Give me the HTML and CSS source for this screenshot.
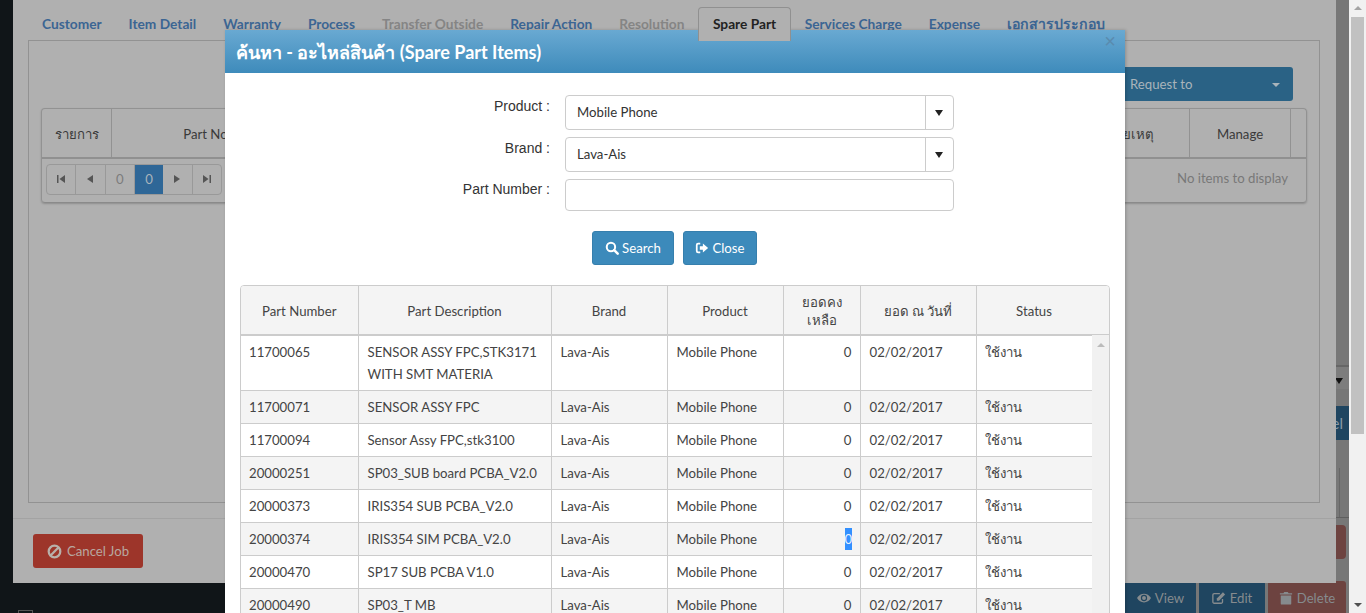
FILE: index.html
```html
<!DOCTYPE html>
<html lang="en">
<head>
    <meta charset="UTF-8">
    <title>Spare Part Items</title>
    <link rel="stylesheet" href="styles.css">
</head>
<body>
    <!-- window behind the job window -->
    <div class="back-window">
        <div class="back-select"><span class="caret-dark"></span></div>
        <div class="back-btn-row"><span class="back-blue">Cancel</span></div>
        <div class="back-cells"><span></span></div>
        <div class="back-red-row"><span class="back-red"></span></div>
        <div class="back-actions">
            <span class="act act-blue act-view">
                <svg class="ico" viewBox="0 0 16 16"><path d="M0 8c2-3.400 4.800-5 8-5s6 1.600 8 5c-2 3.400-4.800 5-8 5s-6-1.600-8-5z" fill="currentColor"/><circle cx="8" cy="8" r="3.600" fill="#1f4560"/><circle cx="8" cy="8" r="2.200" fill="currentColor"/></svg>View
            </span>
            <span class="act act-blue act-edit">
                <svg class="ico" viewBox="0 0 16 16"><path d="M12 9v3.500a1.500 1.500 0 0 1-1.500 1.500h-8A1.500 1.500 0 0 1 1 12.500v-8A1.500 1.500 0 0 1 2.500 3H9" fill="none" stroke="currentColor" stroke-width="1.500"/><path d="M5.500 8.500 12.500 1.500l2.500 2.500-7 7H5.500z" fill="currentColor"/></svg>Edit
            </span>
            <span class="act act-red">
                <svg class="ico" viewBox="0 0 16 16"><path d="M2 5h12v9.500a1 1 0 0 1-1 1H3a1 1 0 0 1-1-1zM1 2.500h4l1-1.500h4l1 1.500h4V4H1z" fill="currentColor"/></svg>Delete
            </span>
        </div>
    </div>

    <!-- job window -->
    <div class="job-window">
        <ul class="tabs">
            <li class="tab">Customer</li>
            <li class="tab">Item Detail</li>
            <li class="tab">Warranty</li>
            <li class="tab">Process</li>
            <li class="tab tab-off">Transfer Outside</li>
            <li class="tab">Repair Action</li>
            <li class="tab tab-off">Resolution</li>
            <li class="tab tab-on">Spare Part</li>
            <li class="tab">Services Charge</li>
            <li class="tab">Expense</li>
            <li class="tab tab-th">เอกสารประกอบ</li>
        </ul>
        <div class="tab-box">
            <div class="request-row">
                <div class="request-btn">Request to <span class="caret-light"></span></div>
            </div>
            <div class="back-grid">
                <div class="back-head">
                    <div class="bh bh-item">รายการ</div>
                    <div class="bh bh-part">Part No.</div>
                    <div class="bh bh-note">หมายเหตุ</div>
                    <div class="bh bh-manage">Manage</div>
                    <div class="bh-end"></div>
                </div>
                <div class="back-pager">
                    <div class="pager">
                        <span class="pg"><svg class="pg-ico" viewBox="0 0 10 10"><path d="M1 1h1.500v8H1zM9 1v8L3.500 5z"/></svg></span>
                        <span class="pg"><svg class="pg-ico" viewBox="0 0 10 10"><path d="M8 1v8L2 5z"/></svg></span>
                        <span class="pg pg-num">0</span>
                        <span class="pg pg-cur">0</span>
                        <span class="pg"><svg class="pg-ico" viewBox="0 0 10 10"><path d="M2 1v8l6-4z"/></svg></span>
                        <span class="pg"><svg class="pg-ico" viewBox="0 0 10 10"><path d="M7.500 1H9v8H7.500zM1 1v8l5.500-4z"/></svg></span>
                    </div>
                    <span class="no-items">No items to display</span>
                </div>
            </div>
        </div>
        <div class="job-foot">
            <span class="cancel-btn">
                <svg class="ico ico-ban" viewBox="0 0 16 16"><circle cx="8" cy="8" r="6.200" fill="none" stroke="currentColor" stroke-width="2.400"/><path d="M3.800 12.200 12.200 3.800" stroke="currentColor" stroke-width="2.400"/></svg>Cancel Job
            </span>
        </div>
    </div>

    <div class="under-check"></div>

    <!-- search dialog -->
    <div class="dialog">
        <div class="dialog-head">
            <span class="dialog-title">ค้นหา - อะไหล่สินค้า (Spare Part Items)</span>
            <span class="dialog-x">×</span>
        </div>
        <div class="dialog-body">
            <div class="form-row">
                <label class="form-label">Product :</label>
                <div class="combo"><span class="combo-val">Mobile Phone</span><span class="combo-arrow"><span class="caret-dark"></span></span></div>
            </div>
            <div class="form-row">
                <label class="form-label">Brand :</label>
                <div class="combo"><span class="combo-val">Lava-Ais</span><span class="combo-arrow"><span class="caret-dark"></span></span></div>
            </div>
            <div class="form-row form-row-last">
                <label class="form-label">Part Number :</label>
                <input class="text-input" type="text">
            </div>
            <div class="btn-row">
                <span class="btn btn-search">
                    <svg class="ico" viewBox="0 0 16 16"><circle cx="6.800" cy="6.800" r="4.800" fill="none" stroke="currentColor" stroke-width="2.300"/><path d="M10.500 10.500 14.500 14.500" stroke="currentColor" stroke-width="2.800" stroke-linecap="round"/></svg>Search
                </span>
                <span class="btn btn-close">
                    <svg class="ico" viewBox="0 0 16 16"><path d="M6 3H3.500A1.500 1.500 0 0 0 2 4.500v7A1.500 1.500 0 0 0 3.500 13H6" fill="none" stroke="currentColor" stroke-width="2"/><path d="M5.500 6H9V2.800L15 8l-6 5.200V10H5.500z" fill="currentColor"/></svg>Close
                </span>
            </div>

            <div class="grid">
                <div class="grid-main">
                    <table class="parts">
                        <thead>
                            <tr>
                                <th class="c-no">Part Number</th>
                                <th class="c-desc">Part Description</th>
                                <th class="c-brand">Brand</th>
                                <th class="c-prod">Product</th>
                                <th class="c-qty">ยอดคง<br>เหลือ</th>
                                <th class="c-date">ยอด ณ วันที่</th>
                                <th class="c-status">Status</th>
                            </tr>
                        </thead>
                        <tbody>
                            <tr class="row-tall">
                                <td>11700065</td><td>SENSOR ASSY FPC,STK3171 WITH SMT MATERIA</td><td>Lava-Ais</td><td>Mobile Phone</td><td class="num">0</td><td>02/02/2017</td><td>ใช้งาน</td>
                            </tr>
                            <tr class="alt">
                                <td>11700071</td><td>SENSOR ASSY FPC</td><td>Lava-Ais</td><td>Mobile Phone</td><td class="num">0</td><td>02/02/2017</td><td>ใช้งาน</td>
                            </tr>
                            <tr>
                                <td>11700094</td><td>Sensor Assy FPC,stk3100</td><td>Lava-Ais</td><td>Mobile Phone</td><td class="num">0</td><td>02/02/2017</td><td>ใช้งาน</td>
                            </tr>
                            <tr class="alt">
                                <td>20000251</td><td>SP03_SUB board PCBA_V2.0</td><td>Lava-Ais</td><td>Mobile Phone</td><td class="num">0</td><td>02/02/2017</td><td>ใช้งาน</td>
                            </tr>
                            <tr>
                                <td>20000373</td><td>IRIS354 SUB PCBA_V2.0</td><td>Lava-Ais</td><td>Mobile Phone</td><td class="num">0</td><td>02/02/2017</td><td>ใช้งาน</td>
                            </tr>
                            <tr class="alt">
                                <td>20000374</td><td>IRIS354 SIM PCBA_V2.0</td><td>Lava-Ais</td><td>Mobile Phone</td><td class="num"><span class="picked">0</span></td><td>02/02/2017</td><td>ใช้งาน</td>
                            </tr>
                            <tr>
                                <td>20000470</td><td>SP17 SUB PCBA V1.0</td><td>Lava-Ais</td><td>Mobile Phone</td><td class="num">0</td><td>02/02/2017</td><td>ใช้งาน</td>
                            </tr>
                            <tr class="alt">
                                <td>20000490</td><td>SP03_T MB</td><td>Lava-Ais</td><td>Mobile Phone</td><td class="num">0</td><td>02/02/2017</td><td>ใช้งาน</td>
                            </tr>
                        </tbody>
                    </table>
                </div>
                <div class="grid-side">
                    <div class="side-head"></div>
                    <div class="side-track"><span class="arrow-up"></span></div>
                </div>
            </div>
        </div>
    </div>

    <!-- page scrollbar -->
    <div class="page-scroll">
        <span class="ps-up"></span>
        <div class="ps-thumb"></div>
        <span class="ps-down"></span>
    </div>
</body>
</html>
```

FILE: styles.css
```css
* {
    margin: 0;
    padding: 0;
    box-sizing: border-box;
}

html, body {
    height: 100%;
    overflow: hidden;
}

body {
    position: relative;
    background: #101518;
    font-family: Lato, "Noto Sans", sans-serif;
    font-size: 13.2px;
    color: #333;
}

.ico {
    width: 14px;
    height: 14px;
    margin-right: 4px;
    vertical-align: -2px;
}

/* window behind */
.back-window {
    position: absolute;
    left: 620px;
    top: 0;
    width: 729px;
    height: 613px;
    background: #777;
    padding-top: 365px;
    display: flex;
    flex-direction: column;
    align-items: flex-end;
}

.back-select {
    width: 100%;
    height: 24px;
    border-top: 2px solid #666;
    background: #7d7d7d;
    text-align: right;
    padding: 11px 6px 0 0;
    line-height: 0;
}

.back-select .caret-dark {
    border-top-color: #111;
}

.back-btn-row {
    width: 100%;
    height: 34px;
    margin-top: 17px;
    text-align: right;
}

.back-blue {
    display: inline-block;
    height: 34px;
    line-height: 34px;
    padding: 0 6px 0 20px;
    background: #1f4560;
    color: #8a9aa6;
    font-size: 15px;
}

.back-cells {
    width: 100%;
    height: 50px;
    margin-top: 28px;
    border-bottom: 1px solid #5f5f5f;
    display: flex;
    justify-content: flex-end;
}

.back-cells span {
    width: 1px;
    height: 100%;
    background: #666;
    margin-right: 9px;
}

.back-red-row {
    width: 100%;
    height: 34px;
    margin-top: 7px;
    padding-right: 3px;
    text-align: right;
}

.back-red {
    display: inline-block;
    width: 60px;
    height: 34px;
    background: #6d4340;
    border-radius: 4px;
}

.back-actions {
    display: flex;
    gap: 3px;
    margin-top: 22px;
    padding-right: 3px;
}

.act {
    height: 32px;
    line-height: 34px;
    text-align: center;
    color: #868b8e;
    border-radius: 3px 3px 0 0;
}

.act-blue {
    background: #1f4560;
}

.act-view {
    width: 71px;
}

.act-edit {
    width: 66px;
}

.act-red {
    width: 78px;
    background: #6d4340;
}

/* job window */
.job-window {
    position: absolute;
    left: 13px;
    top: 0;
    width: 1323px;
    height: 583px;
    background: #b0b0b0;
    display: flex;
    flex-direction: column;
}

.tabs {
    list-style: none;
    display: flex;
    height: 41px;
    padding: 7px 0 0 15.500px;
    margin-bottom: -1px;
    font-size: 13.720px;
}

.tab {
    height: 34px;
    padding: 6px 12.500px 0;
    line-height: 20px;
    border: 1px solid transparent;
    border-bottom: 0;
    font-weight: 700;
    color: #3b6593;
    white-space: nowrap;
}

.tab-th {
    font-size: 14.100px;
}

.tab-off {
    color: #858585;
}

.tab-on {
    padding: 6px 14px 0;
    color: #222;
    border-color: #909090;
    border-radius: 4px 4px 0 0;
    background: #b0b0b0;
    position: relative;
    z-index: 1;
}

.tab-box {
    margin: 0 16px 0 15px;
    height: 463px;
    border: 1px solid #929292;
    padding: 26px 12px 0;
}

.request-row {
    display: flex;
    justify-content: flex-end;
    padding-right: 14px;
}

.request-btn {
    width: 260px;
    height: 34px;
    line-height: 34px;
    padding-left: 97px;
    border-radius: 3px;
    background: #2a6285;
    color: #a9b4bb;
    position: relative;
}

.caret-light {
    position: absolute;
    right: 13px;
    top: 16px;
    border: 4px solid transparent;
    border-top-color: #a9b4bb;
}

.back-grid {
    margin-top: 7px;
    height: 95px;
    border: 1px solid #929292;
    border-bottom-color: #8a8a8a;
    border-radius: 4px;
    box-shadow: 0 1px 2px rgba(0, 0, 0, 0.2);
}

.back-head {
    display: flex;
    height: 50px;
    border-bottom: 2px solid #909090;
}

.bh {
    line-height: 50px;
    text-align: center;
    border-right: 1px solid #929292;
    color: #3a3a3a;
}

.bh-item {
    width: 70px;
}

.bh-part {
    width: 191px;
}

.bh-note {
    width: 887px;
    padding-left: 759px;
}

.bh-manage {
    width: 101px;
}

.bh-end {
    flex: 1;
}

.back-pager {
    display: flex;
    align-items: center;
    justify-content: space-between;
    padding: 5px 18px 0 4px;
}

.pager {
    display: flex;
    border: 1px solid #999;
    border-radius: 4px;
    height: 31px;
    width: 176px;
    overflow: hidden;
}

.pg {
    flex: 1;
    line-height: 29px;
    text-align: center;
    border-right: 1px solid #999;
    color: #444;
}

.pg:last-child {
    border-right: 0;
}

.pg-num {
    color: #7c7c7c;
}

.pg-cur {
    background: #2f6797;
    color: #a9b4bb;
    border-right: 0;
}

.pg-ico {
    width: 10px;
    height: 10px;
    fill: #555;
}

.no-items {
    color: #787878;
    margin-top: -3px;
}

.job-foot {
    margin-top: 15px;
    border-top: 1px solid #a3a3a3;
    padding: 15px 20px 0;
}

.cancel-btn {
    display: inline-block;
    width: 110px;
    height: 34px;
    line-height: 34px;
    text-align: center;
    border-radius: 3px;
    background: #9d352a;
    color: #b8a8a0;
}

.ico-ban {
    width: 15px;
    height: 15px;
    margin-right: 5px;
    vertical-align: -3px;
    color: #b8b0aa;
}

.under-check {
    position: absolute;
    left: 18px;
    top: 610px;
    width: 15px;
    height: 3px;
    border: 1px solid #555;
    border-bottom: 0;
}

/* dialog */
.dialog {
    position: absolute;
    left: 225px;
    top: 30px;
    width: 900px;
    height: 583px;
    background: #fff;
    box-shadow: 1px 0 3px rgba(0, 0, 0, 0.2);
    overflow: hidden;
}

.dialog-head {
    height: 43px;
    padding: 0 11px;
    background: linear-gradient(#69a9d2, #3e8bbb);
    display: flex;
    justify-content: space-between;
    color: #fff;
}

.dialog-title {
    font-size: 18px;
    font-weight: 700;
    line-height: 44px;
}

.dialog-x {
    font-size: 20px;
    line-height: 22px;
    color: #5a8bae;
    margin-right: -2px;
    font-family: "Liberation Sans", sans-serif;
}

.dialog-body {
    padding: 22px 15px 0;
}

.form-row {
    display: flex;
    height: 35px;
    margin-bottom: 7px;
}

.form-row-last {
    height: 32px;
    margin-bottom: 20px;
}

.form-row-last .form-label {
    line-height: 21px;
}

.form-label {
    width: 310px;
    text-align: right;
    font-family: "Liberation Sans", Arial, sans-serif;
    font-size: 14px;
    line-height: 23px;
    color: #333;
}

.combo,
.text-input {
    width: 389px;
    margin-left: 15px;
    border: 1px solid #ccc;
    border-radius: 4px;
}

.combo {
    display: flex;
    height: 35px;
    line-height: 33px;
}

.combo-val {
    flex: 1;
    padding-left: 11px;
}

.combo-arrow {
    width: 28px;
    border-left: 1px solid #ccc;
    text-align: center;
    line-height: 0;
    padding: 14px 2px 0 0;
}

.caret-dark {
    display: inline-block;
    border: 4px solid transparent;
    border-top: 6px solid #222;
    border-bottom: 0;
}

.text-input {
    height: 32px;
    outline: none;
}

.btn-row {
    display: flex;
    gap: 9px;
    padding-left: 352px;
}

.btn {
    height: 34px;
    text-align: center;
    border-radius: 3px;
    background: #3c8abb;
    border: 1px solid #367fad;
    line-height: 32px;
    color: #fff;
}

.btn-search {
    width: 82px;
}

.btn-close {
    width: 74px;
}

.btn .ico {
    margin-right: 3px;
}

.grid {
    display: flex;
    width: 870px;
    margin-top: 20px;
    border: 1px solid #ccc;
    border-radius: 4px;
    overflow: hidden;
}

.grid-main {
    width: 851px;
}

.parts {
    border-collapse: collapse;
    table-layout: fixed;
    width: 851px;
}

.parts th {
    height: 49px;
    padding-top: 2px;
    font-weight: 400;
    line-height: 18px;
    background: #f4f4f4;
    border-right: 1px solid #ccc;
    border-bottom: 2px solid #ccc;
    color: #444;
}

.parts td {
    height: 33px;
    padding: 5px 8px 3px;
    line-height: 22px;
    vertical-align: top;
    border-right: 1px solid #ccc;
    border-bottom: 1px solid #ccc;
    color: #444;
}

.parts td + td {
    padding-left: 9px;
}

.parts td:last-child {
    padding-left: 8px;
}

.parts .row-tall td {
    height: 55px;
}

.parts .alt td {
    background: #f4f4f4;
}

.parts .num {
    text-align: right;
}

.picked {
    display: inline-block;
    background: #3390ff;
    color: #e8f0ff;
    width: 7px;
}

.c-no { width: 117px; }
.c-desc { width: 193px; }
.c-brand { width: 116px; }
.c-prod { width: 116px; }
.c-qty { width: 77px; }
.c-date { width: 116px; }
.c-status { width: 116px; }

.grid-side {
    width: 17px;
    display: flex;
    flex-direction: column;
}

.side-head {
    height: 49px;
    background: #f4f4f4;
    border-bottom: 1px solid #ccc;
}

.side-track {
    flex: 1;
    background: #f1f1f1;
    text-align: center;
    padding-top: 7px;
    line-height: 0;
}

.arrow-up {
    display: inline-block;
    border: 4px solid transparent;
    border-bottom-color: #bbb;
    border-top: 0;
}

/* page scrollbar */
.page-scroll {
    position: absolute;
    right: 0;
    top: 0;
    width: 17px;
    height: 613px;
    background: #f1f1f1;
    display: flex;
    flex-direction: column;
    align-items: center;
}

.ps-up {
    margin-top: 6px;
    border: 4px solid transparent;
    border-bottom-color: #a3a3a3;
    border-top: 0;
}

.ps-thumb {
    width: 13px;
    height: 417px;
    margin-top: 7px;
    background: #c1c1c1;
}

.ps-down {
    margin-top: auto;
    margin-bottom: 6px;
    border: 4px solid transparent;
    border-top-color: #505050;
    border-bottom: 0;
}
```
